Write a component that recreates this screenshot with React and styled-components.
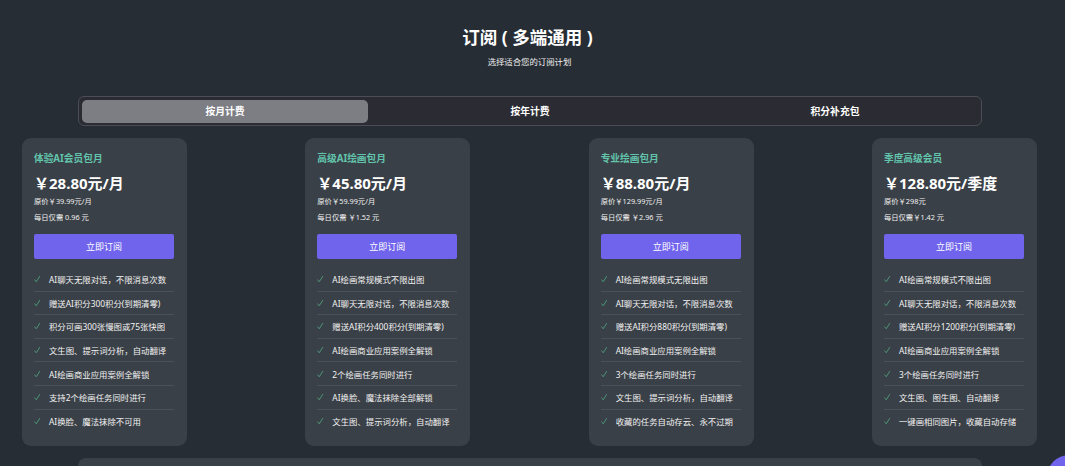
import React from "react"
import styled, { createGlobalStyle } from "styled-components"

const GlobalStyle = createGlobalStyle`
  html, body {
    margin: 0;
    height: 100%;
    overflow: hidden;
    background: #272d34;
  }
  * {
    box-sizing: border-box;
  }
`

const Page = styled.div`
  padding: 27px 28px 0 22px;
  color: #fff;
  font-family: "Noto Sans", "Noto Sans CJK SC", sans-serif;
`

const Header = styled.header`
  text-align: center;
  height: 69px;
`

const Title = styled.h1`
  margin: 0 4px 0 0;
  font-size: 17.5px;
  line-height: 20px;
  font-weight: 700;
  white-space: pre;
`

const Subtitle = styled.p`
  margin: 9px 0 0;
  font-size: 8.4px;
  line-height: 12px;
  color: #f0f0f0;
`

const TabBar = styled.div`
  margin: 0 55px 0 56px;
  height: 30px;
  padding: 2.5px 3px;
  display: flex;
  gap: 19px;
  background: #2b2c33;
  border: 1px solid #4a4d55;
  border-radius: 6px;
`

const Tab = styled.div`
  flex: 1;
  display: flex;
  align-items: center;
  justify-content: center;
  font-size: 9.8px;
  font-weight: 700;
  border-radius: 5px;
  background: ${props => (props.$active ? "#7d7e84" : "transparent")};
`

const Cards = styled.div`
  margin-top: 12px;
  display: flex;
  justify-content: space-between;
`

const Card = styled.article`
  width: 165px;
  height: 308px;
  padding: 14px 13px 0 12px;
  background: #3a4047;
  border-radius: 9px;
`

const PlanName = styled.h2`
  margin: 0;
  font-size: 9.7px;
  line-height: 14px;
  font-weight: 700;
  color: #62c4ac;
`

const Price = styled.div`
  margin-top: 7px;
  font-size: 15px;
  line-height: 20px;
  font-weight: 700;
`

const Note = styled.div`
  margin-top: ${props => props.$gap}px;
  font-size: 7.3px;
  line-height: 10px;
  color: #f0f0f0;
`

const SubscribeButton = styled.button`
  display: block;
  width: 100%;
  height: 25px;
  margin-top: 12px;
  padding: 0;
  border: 0;
  border-radius: 2px;
  background: #7064ec;
  color: #fff;
  font-family: inherit;
  font-size: 9px;
`

const Features = styled.ul`
  list-style: none;
  margin: 9px 0 0;
  padding: 0;
`

const Feature = styled.li`
  display: flex;
  align-items: center;
  gap: 8.5px;
  height: 23.6px;
  font-size: 8.4px;
  color: #f2f2f2;
  white-space: nowrap;
  border-bottom: 1px solid #4c5158;

  &:last-child {
    border-bottom: 0;
  }
`

const CheckIcon = styled.svg`
  flex: none;
  width: 6.5px;
  height: 8px;
  fill: none;
  stroke: #4f9a7c;
  stroke-width: 1;
`

const BottomPanel = styled.div`
  margin: 12px 55px 0 56px;
  height: 60px;
  background: #3a4047;
  border-radius: 8px;
`

const FloatingButton = styled.div`
  position: fixed;
  left: 1047px;
  top: 455px;
  width: 44px;
  height: 44px;
  border-radius: 50%;
  background: #7064ec;
`

const plans = [
  {
    name: "体验AI会员包月",
    price: "￥28.80元/月",
    original: "原价￥39.99元/月",
    daily: "每日仅需 0.96 元",
    features: [
      "AI聊天无限对话，不限消息次数",
      "赠送AI积分300积分(到期清零)",
      "积分可画300张慢图或75张快图",
      "文生图、提示词分析，自动翻译",
      "AI绘画商业应用案例全解锁",
      "支持2个绘画任务同时进行",
      "AI换脸、魔法抹除不可用",
    ],
  },
  {
    name: "高级AI绘画包月",
    price: "￥45.80元/月",
    original: "原价￥59.99元/月",
    daily: "每日仅需 ￥1.52 元",
    features: [
      "AI绘画常规模式不限出图",
      "AI聊天无限对话，不限消息次数",
      "赠送AI积分400积分(到期清零)",
      "AI绘画商业应用案例全解锁",
      "2个绘画任务同时进行",
      "AI换脸、魔法抹除全部解锁",
      "文生图、提示词分析，自动翻译",
    ],
  },
  {
    name: "专业绘画包月",
    price: "￥88.80元/月",
    original: "原价￥129.99元/月",
    daily: "每日仅需 ￥2.96 元",
    features: [
      "AI绘画常规模式无限出图",
      "AI聊天无限对话，不限消息次数",
      "赠送AI积分880积分(到期清零)",
      "AI绘画商业应用案例全解锁",
      "3个绘画任务同时进行",
      "文生图、提示词分析，自动翻译",
      "收藏的任务自动存云、永不过期",
    ],
  },
  {
    name: "季度高级会员",
    price: "￥128.80元/季度",
    original: "原价￥298元",
    daily: "每日仅需￥1.42 元",
    features: [
      "AI绘画常规模式不限出图",
      "AI聊天无限对话，不限消息次数",
      "赠送AI积分1200积分(到期清零)",
      "AI绘画商业应用案例全解锁",
      "3个绘画任务同时进行",
      "文生图、图生图、自动翻译",
      "一键画相同图片，收藏自动存储",
    ],
  },
]

const App = () => (
  <Page>
    <GlobalStyle />
    <Header>
      <Title>订阅 ( 多端通用 )</Title>
      <Subtitle>选择适合您的订阅计划</Subtitle>
    </Header>
    <TabBar>
      <Tab $active>按月计费</Tab>
      <Tab>按年计费</Tab>
      <Tab>积分补充包</Tab>
    </TabBar>
    <Cards>
      {plans.map(plan => (
        <Card key={plan.name}>
          <PlanName>{plan.name}</PlanName>
          <Price>{plan.price}</Price>
          <Note $gap={3}>{plan.original}</Note>
          <Note $gap={6}>{plan.daily}</Note>
          <SubscribeButton>立即订阅</SubscribeButton>
          <Features>
            {plan.features.map(feature => (
              <Feature key={feature}>
                <CheckIcon viewBox="0 0 7 8">
                  <path d="M0.5 4.6 L2.4 7 L6.4 0.8" />
                </CheckIcon>
                {feature}
              </Feature>
            ))}
          </Features>
        </Card>
      ))}
    </Cards>
    <BottomPanel />
    <FloatingButton />
  </Page>
)

export default App
